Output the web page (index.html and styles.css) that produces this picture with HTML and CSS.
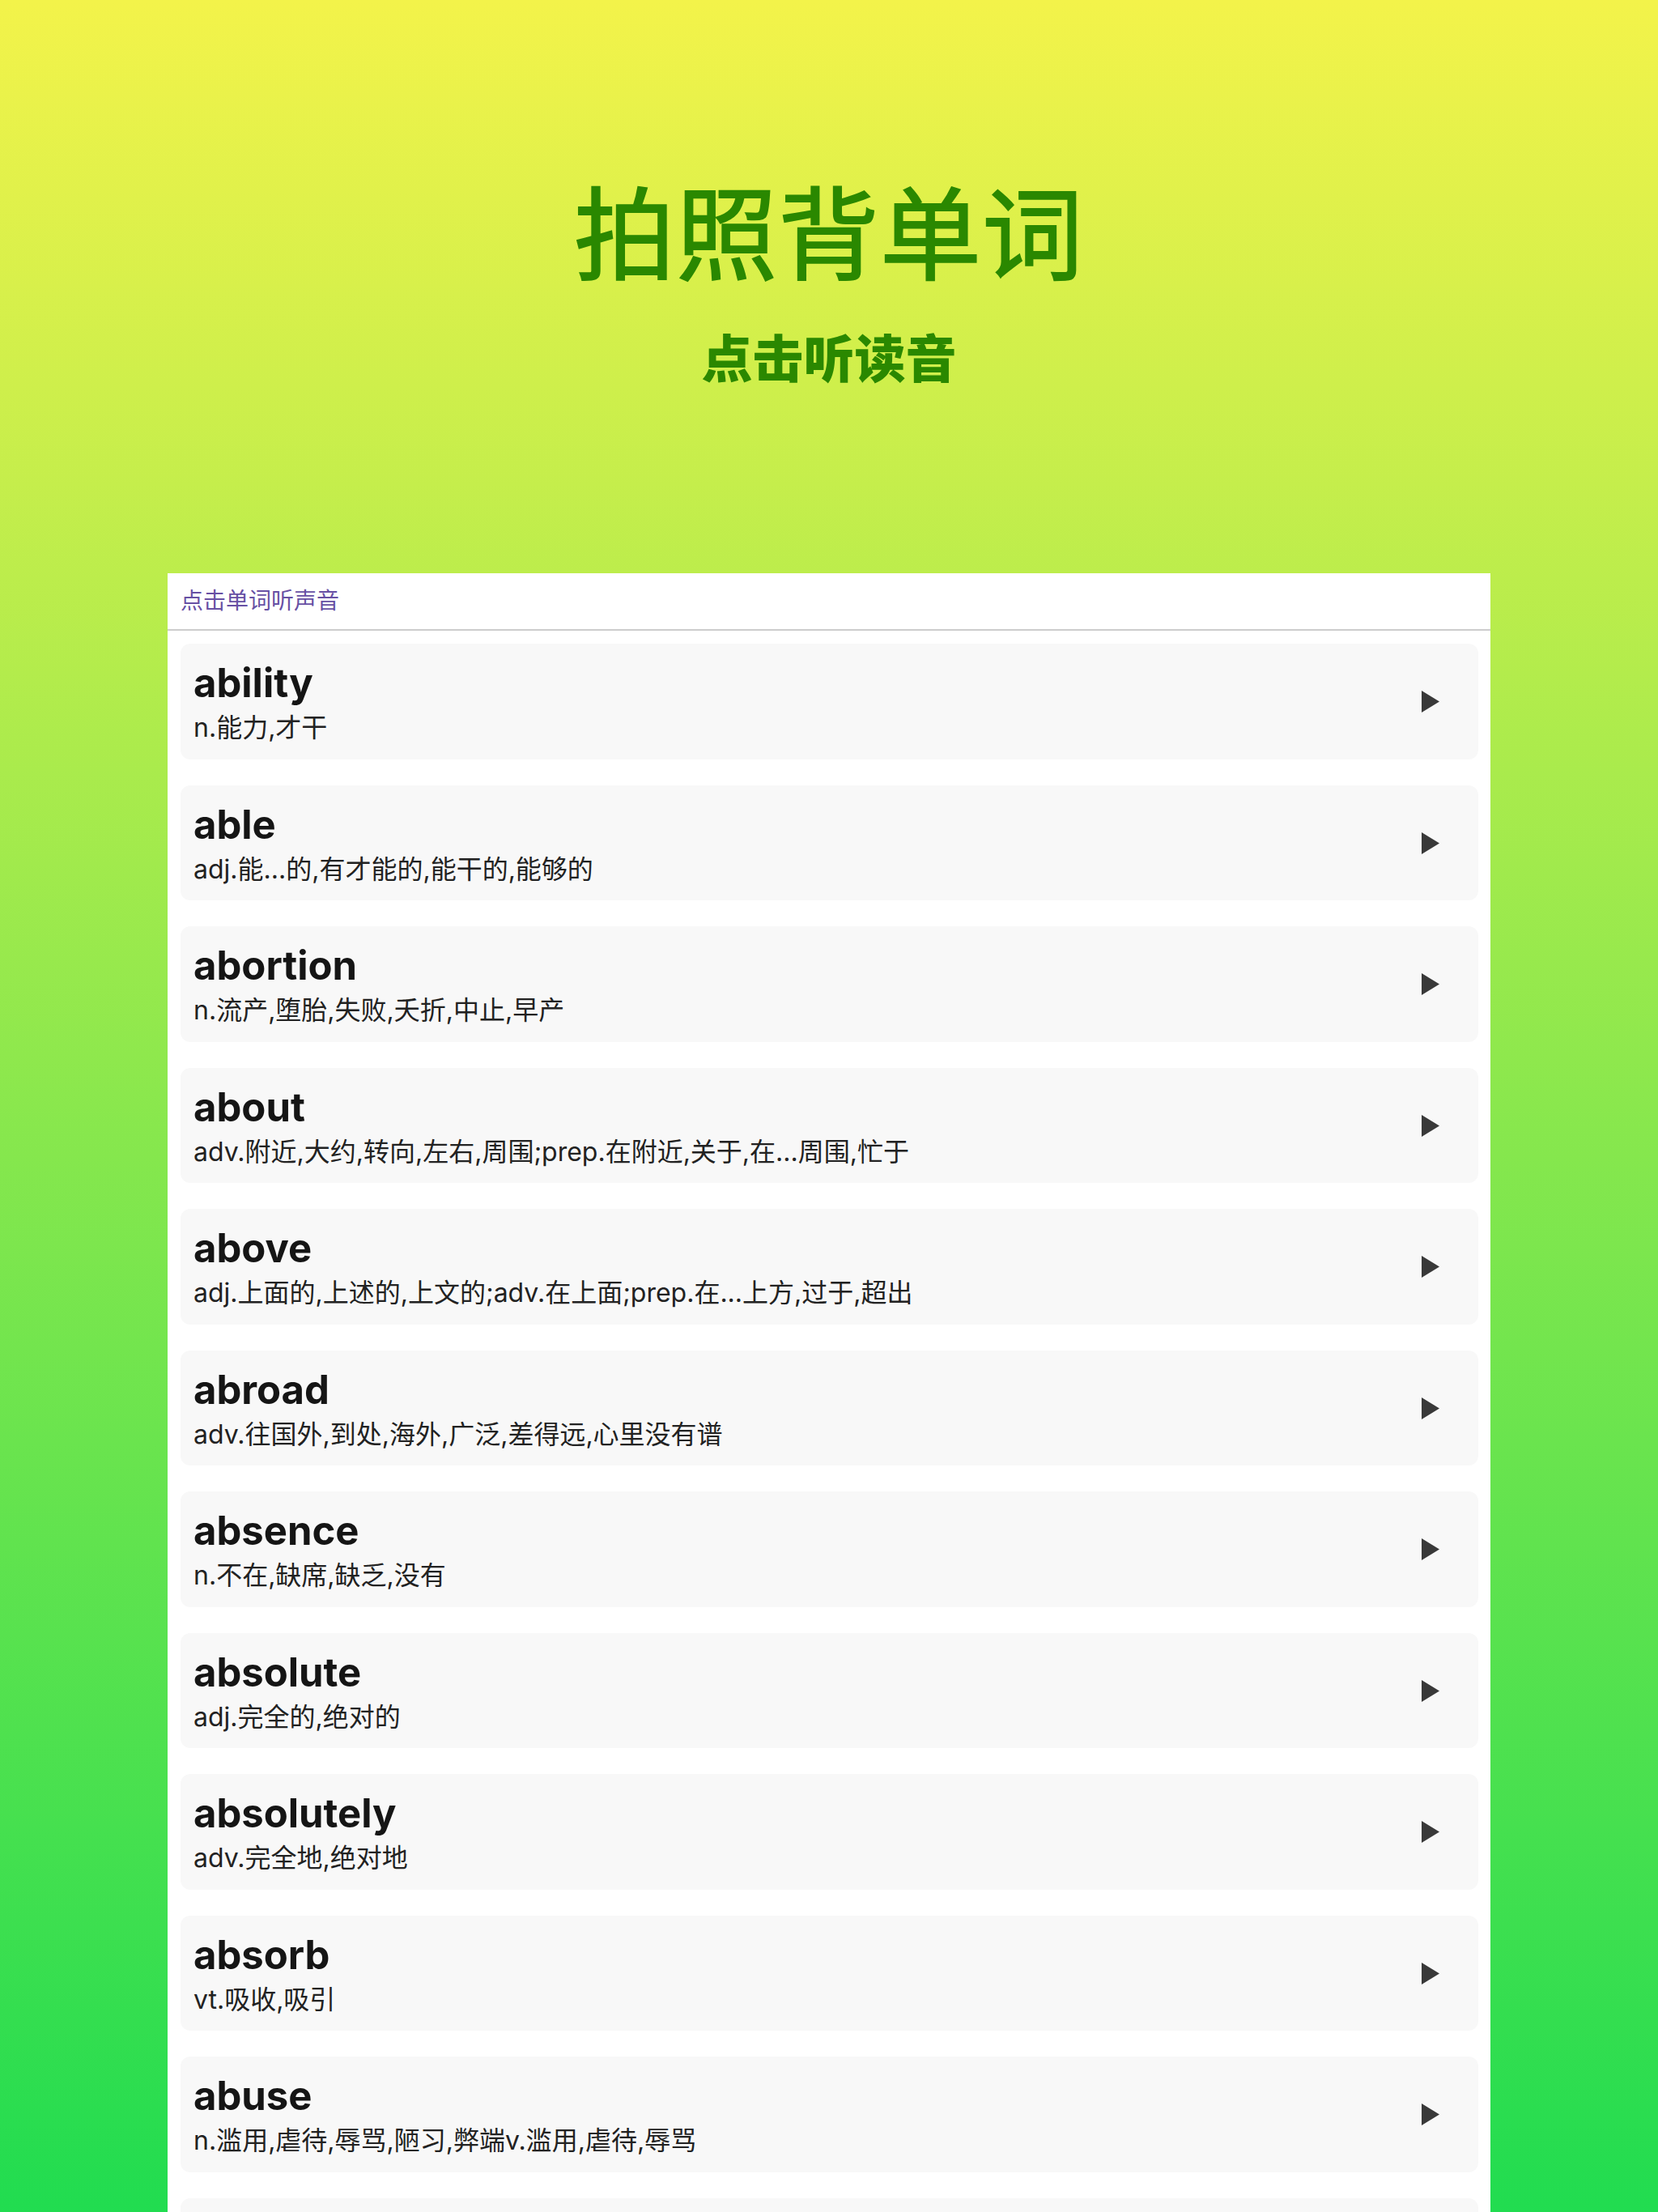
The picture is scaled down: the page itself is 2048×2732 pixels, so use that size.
FILE: index.html
```html
<!DOCTYPE html>
<html lang="zh-CN">
<head>
<meta charset="utf-8">
<title>拍照背单词</title>
<link rel="stylesheet" href="styles.css">
</head>
<body>
<div class="page">
  <header class="hero">
    <h1 class="title">拍照背单词</h1>
    <p class="subtitle">点击听读音</p>
  </header>
  <main class="panel">
    <div class="panel-head">点击单词听声音</div>
    <ul class="list">
      <li class="card"><div class="text"><div class="word">ability</div><div class="def">n.能力,才干</div></div><svg class="play" viewBox="0 0 22 27"><polygon points="0,0 22,13.5 0,27"/></svg></li>
      <li class="card"><div class="text"><div class="word">able</div><div class="def">adj.能...的,有才能的,能干的,能够的</div></div><svg class="play" viewBox="0 0 22 27"><polygon points="0,0 22,13.5 0,27"/></svg></li>
      <li class="card"><div class="text"><div class="word">abortion</div><div class="def">n.流产,堕胎,失败,夭折,中止,早产</div></div><svg class="play" viewBox="0 0 22 27"><polygon points="0,0 22,13.5 0,27"/></svg></li>
      <li class="card"><div class="text"><div class="word">about</div><div class="def">adv.附近,大约,转向,左右,周围;prep.在附近,关于,在...周围,忙于</div></div><svg class="play" viewBox="0 0 22 27"><polygon points="0,0 22,13.5 0,27"/></svg></li>
      <li class="card"><div class="text"><div class="word">above</div><div class="def">adj.上面的,上述的,上文的;adv.在上面;prep.在...上方,过于,超出</div></div><svg class="play" viewBox="0 0 22 27"><polygon points="0,0 22,13.5 0,27"/></svg></li>
      <li class="card"><div class="text"><div class="word">abroad</div><div class="def">adv.往国外,到处,海外,广泛,差得远,心里没有谱</div></div><svg class="play" viewBox="0 0 22 27"><polygon points="0,0 22,13.5 0,27"/></svg></li>
      <li class="card"><div class="text"><div class="word">absence</div><div class="def">n.不在,缺席,缺乏,没有</div></div><svg class="play" viewBox="0 0 22 27"><polygon points="0,0 22,13.5 0,27"/></svg></li>
      <li class="card"><div class="text"><div class="word">absolute</div><div class="def">adj.完全的,绝对的</div></div><svg class="play" viewBox="0 0 22 27"><polygon points="0,0 22,13.5 0,27"/></svg></li>
      <li class="card"><div class="text"><div class="word">absolutely</div><div class="def">adv.完全地,绝对地</div></div><svg class="play" viewBox="0 0 22 27"><polygon points="0,0 22,13.5 0,27"/></svg></li>
      <li class="card"><div class="text"><div class="word">absorb</div><div class="def">vt.吸收,吸引</div></div><svg class="play" viewBox="0 0 22 27"><polygon points="0,0 22,13.5 0,27"/></svg></li>
      <li class="card"><div class="text"><div class="word">abuse</div><div class="def">n.滥用,虐待,辱骂,陋习,弊端v.滥用,虐待,辱骂</div></div><svg class="play" viewBox="0 0 22 27"><polygon points="0,0 22,13.5 0,27"/></svg></li>
      <li class="card card-peek"></li>
    </ul>
  </main>
</div>
</body>
</html>
```
FILE: styles.css
```css
* { box-sizing: border-box; }
html, body {
  margin: 0;
  padding: 0;
}
body {
  width: 2048px;
  height: 2732px;
  overflow: hidden;
  font-family: "Inter", "Noto Sans CJK SC", sans-serif;
}
.page {
  width: 2048px;
  height: 2732px;
  background: linear-gradient(to bottom, #f3f34a 0%, #21dc50 100%);
  display: flex;
  flex-direction: column;
  align-items: center;
  overflow: hidden;
}
.hero {
  flex: none;
  width: 100%;
  height: 708px;
  padding-top: 220px;
  text-align: center;
}
.title {
  margin: 0;
  font-family: "Noto Sans CJK SC", sans-serif;
  font-size: 125px;
  line-height: 124px;
  font-weight: 400;
  letter-spacing: 1px;
  -webkit-text-stroke: 1.8px #2a8800;
  color: #2a8800;
}
.subtitle {
  margin: 64px 0 0;
  font-family: "Noto Sans CJK SC", sans-serif;
  font-size: 63px;
  line-height: 62px;
  font-weight: 900;
  color: #2a8800;
}
.panel {
  flex: none;
  width: 1634px;
  height: 2024px;
  background: #ffffff;
  overflow: hidden;
}
.panel-head {
  height: 71px;
  padding-left: 16px;
  padding-bottom: 5px;
  display: flex;
  align-items: center;
  font-family: "Noto Sans CJK SC", sans-serif;
  font-size: 28px;
  color: #6750a4;
  border-bottom: 2px solid #cdcdcd;
}
.list {
  list-style: none;
  margin: 0;
  padding: 16px 15px 0 16px;
  display: flex;
  flex-direction: column;
  gap: 32px;
}
.card {
  height: 142.5px;
  flex: none;
  background: #f8f8f8;
  border-radius: 12px;
  padding: 19px 48.5px 0 16px;
  display: flex;
  align-items: flex-start;
  justify-content: space-between;
}
.text {
  display: flex;
  flex-direction: column;
}
.word {
  font-size: 49px;
  line-height: 60px;
  font-weight: 700;
  color: #151515;
}
.def {
  margin-top: 3px;
  font-size: 32px;
  line-height: 44px;
  color: #222222;
}
.play {
  width: 22px;
  height: 27px;
  margin-top: 39px;
  fill: #393939;
  flex: none;
}
```
